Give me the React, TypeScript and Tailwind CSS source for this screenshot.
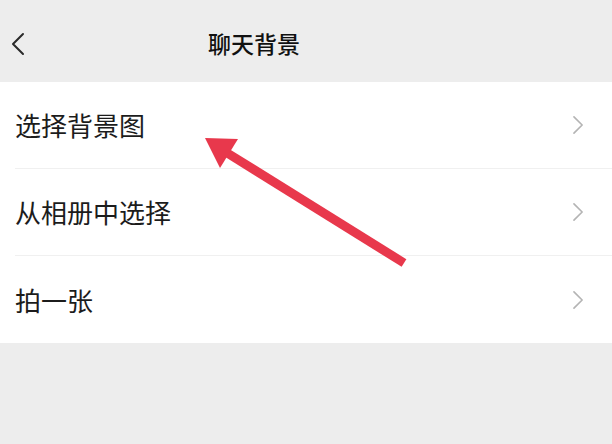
import React from 'react'

const font = { fontFamily: '"Noto Sans CJK SC", "Noto Sans", sans-serif' }

function Chevron({ left = false, className = '' }: { left?: boolean; className?: string }) {
  return (
    <svg width="14" height="22" viewBox="0 0 14 22" className={className} fill="none">
      <path
        d={left ? 'M12 1 L2 11 L12 21' : 'M2 2 L11 11 L2 20'}
        stroke="currentColor"
        strokeWidth={left ? 2 : 1.8}
        strokeLinecap="round"
        strokeLinejoin="round"
      />
    </svg>
  )
}

const items = ['选择背景图', '从相册中选择', '拍一张']

export default function App() {
  return (
    <div className="relative w-[612px] h-[444px] bg-[#ededed] overflow-hidden" style={font}>
      {/* 顶栏 */}
      <div className="h-[82px] flex items-center relative">
        <Chevron left className="absolute left-[11px] top-[31px] text-[#2a2a2a] w-[14px] h-[26px]" />
        <div className="pl-[208px] pt-[4px] text-[23px] text-[#111] font-medium leading-none">聊天背景</div>
      </div>

      {/* 列表 */}
      <div className="bg-white">
        {items.map((label, i) => (
          <div key={label} className="pl-[15px]">
            <div
              className={`h-[87px] flex items-center justify-between pr-[27px] ${
                i < items.length - 1 ? 'border-b border-[#f0f0f0]' : ''
              }`}
            >
              <span className="text-[26px] text-[#1c1c1c] leading-none">{label}</span>
              <Chevron className="text-[#b4b4b4] w-[13px] h-[20px]" />
            </div>
          </div>
        ))}
      </div>

      {/* 指示箭头 */}
      <svg className="absolute left-0 top-0 pointer-events-none" width="612" height="444">
        <line x1="404" y1="263" x2="224" y2="151" stroke="#e8384c" strokeWidth="9" />
        <polygon points="205,138 238,139 220,168" fill="#e8384c" />
      </svg>
    </div>
  )
}
